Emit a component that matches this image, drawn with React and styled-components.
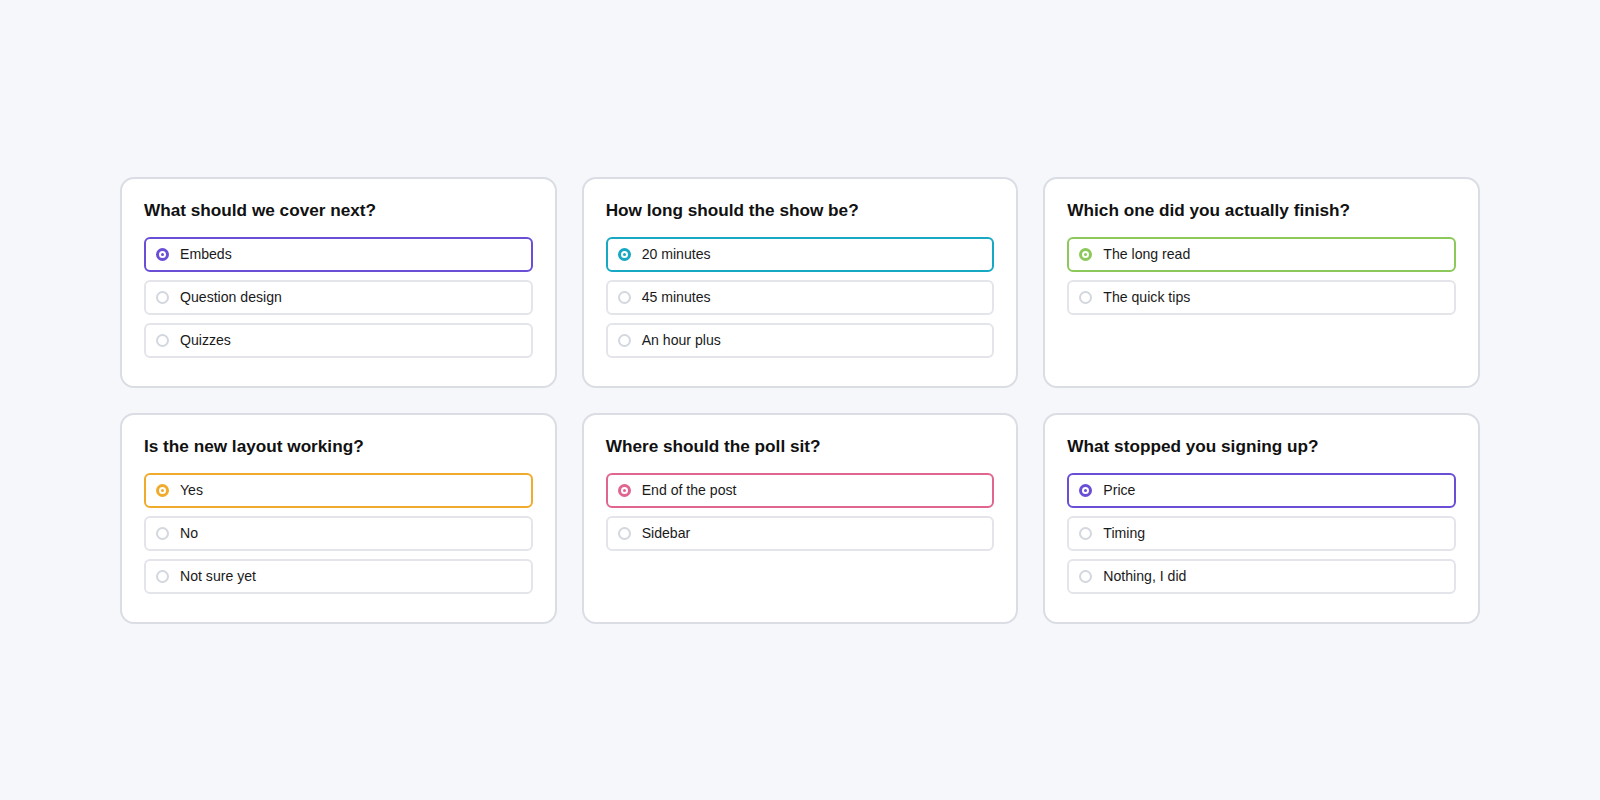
import React from "react";
import styled, { createGlobalStyle } from "styled-components";

const polls = [
  {
    question: "What should we cover next?",
    color: "#6a4fd6",
    options: ["Embeds", "Question design", "Quizzes"],
  },
  {
    question: "How long should the show be?",
    color: "#17a8c4",
    options: ["20 minutes", "45 minutes", "An hour plus"],
  },
  {
    question: "Which one did you actually finish?",
    color: "#8cc95a",
    options: ["The long read", "The quick tips"],
  },
  {
    question: "Is the new layout working?",
    color: "#f0ab2c",
    options: ["Yes", "No", "Not sure yet"],
  },
  {
    question: "Where should the poll sit?",
    color: "#e06590",
    options: ["End of the post", "Sidebar"],
  },
  {
    question: "What stopped you signing up?",
    color: "#6a4fd6",
    options: ["Price", "Timing", "Nothing, I did"],
  },
];

const GlobalStyle = createGlobalStyle`
  * { box-sizing: border-box; }
  body {
    margin: 0;
    background: #f6f7fb;
    font-family: "Liberation Sans", Arial, sans-serif;
    color: #111;
  }
`;

const App = () => {
  return (
    <>
      <GlobalStyle />
      <Page>
        <Grid>
          {polls.map((poll) => (
            <Card key={poll.question}>
              <Title>{poll.question}</Title>
              <Options>
                {poll.options.map((opt, i) => (
                  <Option key={opt} selected={i === 0} accent={poll.color}>
                    <Radio selected={i === 0} accent={poll.color} />
                    <span>{opt}</span>
                  </Option>
                ))}
              </Options>
            </Card>
          ))}
        </Grid>
      </Page>
    </>
  );
};

const Page = styled.main`
  min-height: 800px;
  display: flex;
  align-items: center;
  justify-content: center;
`;

const Grid = styled.div`
  width: 1360px;
  display: grid;
  grid-template-columns: repeat(3, 1fr);
  gap: 25px;
`;

const Card = styled.section`
  background: #fff;
  border: 2px solid #dadde4;
  border-radius: 14px;
  padding: 21px 22px 26px;
  min-height: 211px;
`;

const Title = styled.h2`
  margin: 0 0 16px;
  font-size: 17.2px;
  line-height: 21px;
  font-weight: 700;
  color: #111;
`;

const Options = styled.div`
  display: flex;
  flex-direction: column;
  gap: 8px;
`;

const Option = styled.div.withConfig({
  shouldForwardProp: (p) => !["selected", "accent"].includes(p),
})`
  display: flex;
  align-items: center;
  gap: 11px;
  height: 35px;
  padding: 0 10px;
  border: 2px solid ${({ selected, accent }) => (selected ? accent : "#e3e5ea")};
  border-radius: 6px;
  font-size: 14.1px;
  color: #1a1a1a;
`;

const Radio = styled.span.withConfig({
  shouldForwardProp: (p) => !["selected", "accent"].includes(p),
})`
  flex: none;
  width: 13px;
  height: 13px;
  border-radius: 50%;
  border: ${({ selected, accent }) =>
    selected ? `3.5px solid ${accent}` : "2px solid #d3d7de"};
  display: flex;
  align-items: center;
  justify-content: center;

  &::after {
    content: "";
    display: ${({ selected }) => (selected ? "block" : "none")};
    width: 3px;
    height: 3px;
    border-radius: 50%;
    background: ${({ accent }) => accent};
  }
`;

export default App;
